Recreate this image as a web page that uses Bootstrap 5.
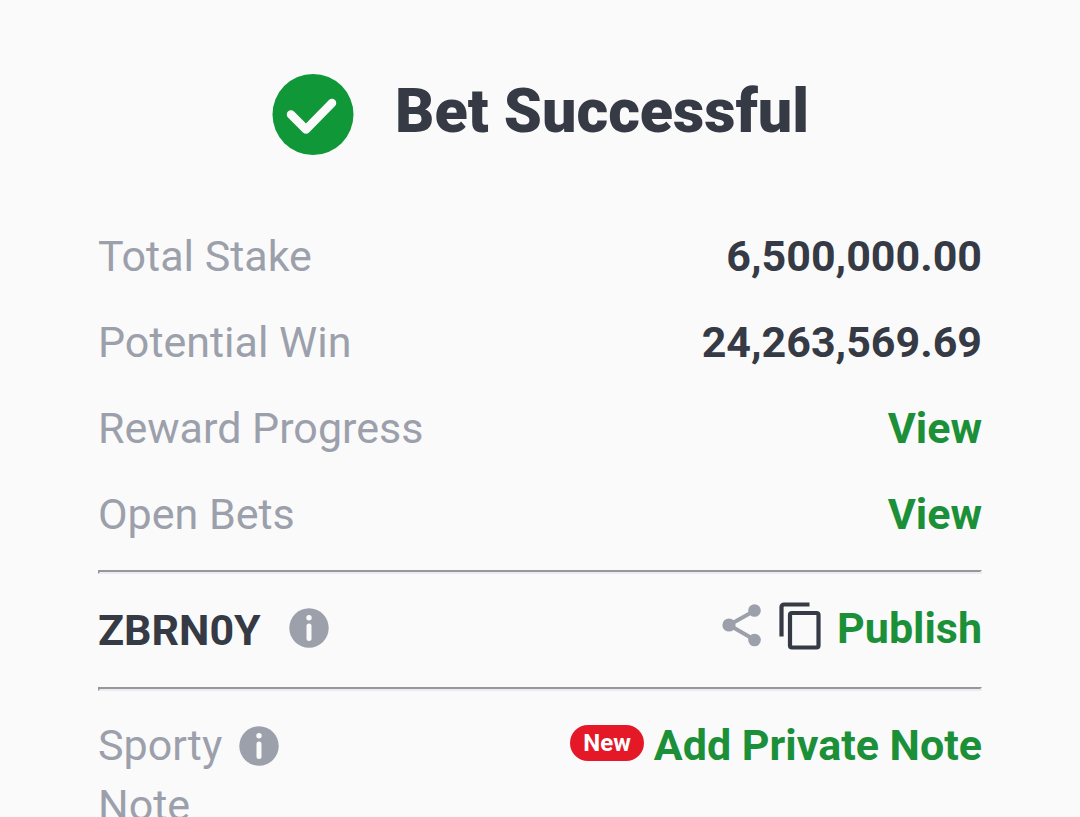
<!DOCTYPE html>
<html lang="en">
<head>
<meta charset="utf-8">
<meta name="viewport" content="width=device-width, initial-scale=1">
<title>Bet Successful</title>
<link href="https://cdn.jsdelivr.net/npm/bootstrap@5.3.0/dist/css/bootstrap.min.css" rel="stylesheet">
<style>
  :root { --ink: #353a45; --muted: #9ca0ab; --brand: #1b9038; }
  body { background: #fafafb; color: var(--ink); font-family: Roboto, "Liberation Sans", sans-serif; font-size: 43px; line-height: 60px; }
  .receipt { padding: 72px 98px 0; }
  .receipt-title { font-size: 61px; line-height: 78px; font-weight: 900; }
  .receipt-head { gap: 40px; margin-bottom: 57px; }
  .receipt-row { height: 86px; }
  .receipt-label { color: var(--muted); }
  .receipt-link { color: var(--brand); }
  .receipt-link:hover { color: #12722a; }
  .receipt-rule { height: 4px; border: 2px solid; border-color: #95979d #ececee #ececee #95979d; opacity: 1; }
  .first-rule { margin-top: 13px; }
  .code-row { height: 113px; padding-bottom: 6px; }
  .note-label { max-width: 124px; }
  .note-row { padding-top: 24px; }
  .icon-gap { gap: 17px; }
  .code-gap { gap: 28px; }
  .note-info { margin-top: 11px; }
  .new-pill { background: #e41827; font-size: 24px; line-height: 36px; padding: 0 13px; margin-right: 10px; }
</style>
</head>
<body>
<main class="receipt vh-100 overflow-hidden">
  <header class="receipt-head d-flex justify-content-center align-items-start">
    <svg width="84" height="84" viewBox="0 0 84 84" aria-hidden="true">
      <circle cx="42" cy="42.500" r="40.500" fill="#109838"/>
      <path d="M20 42.500 35 57.500 61 31" fill="none" stroke="#fafafb" stroke-width="8.500" stroke-linecap="round" stroke-linejoin="round"/>
    </svg>
    <h1 class="receipt-title mb-0">Bet Successful</h1>
  </header>

  <dl class="mb-0">
    <div class="receipt-row d-flex justify-content-between align-items-center">
      <dt class="receipt-label fw-normal">Total Stake</dt><dd class="fw-bold mb-0">6,500,000.00</dd>
    </div>
    <div class="receipt-row d-flex justify-content-between align-items-center">
      <dt class="receipt-label fw-normal">Potential Win</dt><dd class="fw-bold mb-0">24,263,569.69</dd>
    </div>
    <div class="receipt-row d-flex justify-content-between align-items-center">
      <dt class="receipt-label fw-normal">Reward Progress</dt><dd class="fw-bold mb-0"><a href="#reward" class="receipt-link text-decoration-none">View</a></dd>
    </div>
    <div class="receipt-row d-flex justify-content-between align-items-center">
      <dt class="receipt-label fw-normal">Open Bets</dt><dd class="fw-bold mb-0"><a href="#bets" class="receipt-link text-decoration-none">View</a></dd>
    </div>
  </dl>

  <hr class="receipt-rule first-rule mb-0">
  <section class="code-row d-flex justify-content-between align-items-center">
    <div class="code-gap d-flex align-items-center">
      <span class="fw-bold pt-1">ZBRN0Y</span>
      <button type="button" class="btn p-0 border-0 d-flex" aria-label="Booking code info">
        <svg width="40" height="40" viewBox="0 0 40 40"><circle cx="20" cy="20" r="19.700" fill="#9ca0ab"/><circle cx="20" cy="9.800" r="2.700" fill="#fafafb"/><path d="M20 18v12.500" stroke="#fafafb" stroke-width="5" stroke-linecap="round"/></svg>
      </button>
    </div>
    <div class="d-flex align-items-center">
      <button type="button" class="btn p-0 pb-1 border-0 d-flex me-3" aria-label="Share">
        <svg width="42" height="48" viewBox="0 0 42 48"><path d="M34 8.500 8 23l26 15" fill="none" stroke="#9ca0ab" stroke-width="4"/><g fill="#9ca0ab"><circle cx="33.500" cy="8.500" r="6.300"/><circle cx="8" cy="23" r="6.600"/><circle cx="33.500" cy="38" r="6.300"/></g></svg>
      </button>
      <button type="button" class="btn p-0 pb-1 border-0 d-flex me-3" aria-label="Copy code">
        <svg width="42" height="48" viewBox="0 0 42 48"><path d="M2.500 34.500V5a2.500 2.500 0 0 1 2.500-2.500h25.500" fill="none" stroke="#353a45" stroke-width="4.200"/><rect x="11" y="11" width="28.500" height="34.500" rx="2" fill="none" stroke="#353a45" stroke-width="4.200"/></svg>
      </button>
      <a href="#publish" class="receipt-link fw-bold text-decoration-none">Publish</a>
    </div>
  </section>

  <hr class="receipt-rule m-0">
  <section class="note-row d-flex justify-content-between align-items-start">
    <div class="icon-gap d-flex align-items-start">
      <span class="receipt-label note-label">Sporty Note</span>
      <button type="button" class="note-info btn p-0 border-0 d-flex" aria-label="Sporty Note info">
        <svg width="40" height="40" viewBox="0 0 40 40"><circle cx="20" cy="20" r="19.700" fill="#9ca0ab"/><circle cx="20" cy="9.800" r="2.700" fill="#fafafb"/><path d="M20 18v12.500" stroke="#fafafb" stroke-width="5" stroke-linecap="round"/></svg>
      </button>
    </div>
    <a href="#note" class="receipt-link fw-bold text-decoration-none d-flex align-items-center">
      <span class="new-pill rounded-pill text-white mb-1">New</span>
      <span>Add Private Note</span>
    </a>
  </section>
</main>
<script src="https://cdn.jsdelivr.net/npm/bootstrap@5.3.0/dist/js/bootstrap.bundle.min.js"></script>
</body>
</html>
